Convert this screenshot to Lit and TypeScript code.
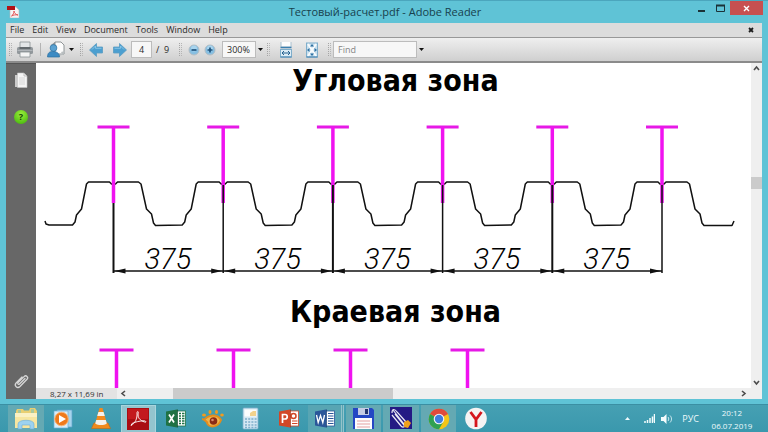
import { LitElement, html, svg, css } from "lit";
import { customElement } from "lit/decorators.js";

const MENUS = ["File", "Edit", "View", "Document", "Tools", "Window", "Help"];

const pic = (w: number, h: number, body: unknown) =>
  html`<svg class="pic" width=${w} height=${h} viewBox="0 0 ${w} ${h}" aria-hidden="true">${body}</svg>`;

const pdfIcon = pic(13, 12, svg`
  <path d="M3 1h6l3 3v8H3z" fill="#f6f4f4" stroke="#bdb5b8" stroke-width=".6"/>
  <path d="M0 0h8v4H0z" fill="#b01217"/>
  <path d="M4.500 10c1.500-1 2.500-3 2.500-5 .4 2.300 1.600 3.400 4 4-2.500-.5-4.500 0-6.500 1z" fill="none" stroke="#e0484b" stroke-width=".9"/>`);

const printIcon = pic(18, 17, svg`
  <path d="M4 1h10v6H4z" fill="#e3e6e8" stroke="#8c9296" stroke-width=".8"/>
  <rect x="1" y="6" width="16" height="7" rx="1.500" fill="#92989c"/>
  <path d="M3.500 6h11v2h-11z" fill="#636a6e"/>
  <path d="M4 11h10v5H4z" fill="#f4f5f5" stroke="#8c9296" stroke-width=".8"/>
  <path d="M1.500 9.500h15" stroke="#b9bec1" stroke-width=".8"/>`);

const shareIcon = pic(18, 18, svg`
  <path d="M8 1h6l3 3v9H8z" fill="#fcfcfc" stroke="#777d80" stroke-width=".8"/>
  <path d="M4 4l4-3v3z" fill="#8a9094"/>
  <path d="M9 14l6-1-1-2 4-1-1.500 3.500-6 2z" fill="#b9bec0"/>
  <circle cx="6.500" cy="7" r="3.400" fill="#5ba2d2" stroke="#2c709f" stroke-width=".7"/>
  <path d="M.5 16c0-4 2-5.500 5-5.500 4 0 7 1.500 7 5.500z" fill="#3d8bc3" stroke="#2c709f" stroke-width=".7"/>`);

const arrow = (flip: boolean) => pic(14, 14, svg`
  <path transform=${flip ? "matrix(-1 0 0 1 14 0)" : "matrix(1 0 0 1 0 0)"}
    d="M.5 7L7.500 .5v3.500H13.500v6H7.500V13.500z" fill="#4c9fd0" stroke="#5b9cc2" stroke-width=".8" stroke-linejoin="round"/>
  <path transform=${flip ? "matrix(-1 0 0 1 14 0)" : "matrix(1 0 0 1 0 0)"} d="M3 6.500L6.500 3v2.300h6" fill="none" stroke="#8bc7e8" stroke-width=".9"/>`);

const zoomGlyph = (plus: boolean) => pic(12, 12, svg`
  <circle cx="6" cy="6" r="5" fill="#86bfe2" stroke="#b3bdc4" stroke-width="1"/>
  <circle cx="6" cy="4.500" r="3" fill="#a8d4ee"/>
  <path d=${plus ? "M3.500 6h5M6 3.500v5" : "M3.500 6h5"} stroke="#1e527c" stroke-width="1.700"/>`);

const fitWidth = pic(12, 16, svg`
  <path d="M1 0v5h10V0" fill="#fdfdfd" stroke="#a9c0cf"/>
  <path d="M.5 5.500h11" stroke="#3c7fae" stroke-width="1.500"/>
  <rect x=".5" y="7.500" width="11" height="7.500" fill="#dcecf6" stroke="#7faecb"/>
  <path d="M.5 15h11" stroke="#3c7fae"/>
  <path d="M2 11h8M4 9l-2 2 2 2M8 9l2 2-2 2" fill="none" stroke="#25618f"/>`);

const fitPage = pic(12, 16, svg`
  <rect x=".5" y="1" width="11" height="14" fill="#c9e0ef" stroke="#7faecb"/>
  <path d="M2 2l8 12M10 2L2 14" stroke="#f7fbfd" stroke-width="2"/>
  <path d="M6 2L4 4.500h4zM6 14l-2-2.500h4zM1 8l2.500-2v4zM11 8L8.500 6v4z" fill="#2c6fa0"/>
  <path d="M.5 15h11" stroke="#3c7fae"/>`);

const pagesIcon = pic(14, 17, svg`
  <path d="M1 3h8v12H1z" fill="#c9c9c9"/>
  <path d="M3.500 1H10l3 3v11.500H3.500z" fill="#f4f4f4" stroke="#c2c2c2" stroke-width=".6"/>
  <path d="M10 1v3h3" fill="none" stroke="#aaa" stroke-width=".7"/>
  <path d="M5 6h6M5 8h6M5 10h6M5 12h6" stroke="#c9c9c9" stroke-width=".7"/>`);

const clipIcon = pic(17, 17, svg`
  <path d="M12 5.500L6.500 11c-1 1-2.400-.2-1.400-1.400l6-6c2-2 4.800.6 2.900 2.700L7 13.500c-2.600 2.500-6.300-.8-3.900-3.500L9 4"
    fill="none" stroke="#d6d6d6" stroke-width="1.300" stroke-linecap="round"/>`);

const tri = html`<svg class="pic" width="5" height="3" viewBox="0 0 5 3" aria-hidden="true"><path d="M0 0h5L2.500 3z" fill="#111"/></svg>`;

const chevron = (d: string) => pic(7, 7, svg`<path d=${d} fill="none" stroke="#4c4c4c" stroke-width="1.600"/>`);

interface Task { name: string; state: string; art: unknown }

const office = (fill: string, dark: string, mark: unknown, sheet: unknown) => svg`
  <rect x="9" y="4" width="11.500" height="15" fill="#fff" stroke=${fill} stroke-width=".8"/>${sheet}
  <path d="M1 4.500L12 2.500v18L1 18.500z" fill=${fill}/><path d="M12 2.500h.8v18H12z" fill=${dark}/>${mark}`;

const TASKS: Task[] = [
  { name: "Explorer", state: "open", art: svg`
    <path d="M1 4l1-2h6l1 1.500h5L15 1h5l2 3v15H1z" fill="#e9cf72"/>
    <path d="M3 3h3v3H3zM16 2h3v4h-3z" fill="#a9c9a0"/>
    <path d="M0 6h22v15H0z" fill="#f7e6a1"/><path d="M0 6h22v4H0z" fill="#fbf1c4"/>
    <path d="M3 22v-5c0-5 16-5 16 0v5h-4v-4H7v4z" fill="#9dd2ef" stroke="#69acd6" stroke-width=".6"/>` },
  { name: "Media Player", state: "", art: svg`
    <path d="M5 3h15v17H5z" fill="#a7d4ec" stroke="#5fa5cd" stroke-width=".7"/>
    <path d="M2 4h14v17H2z" fill="#d8edf8" stroke="#6bb0d8" stroke-width=".7"/>
    <circle cx="9.500" cy="12" r="6.800" fill="#ef7a1b" stroke="#f9b77a"/>
    <path d="M7 8l7 4-7 4z" fill="#fff"/>` },
  { name: "VLC", state: "", art: svg`
    <path d="M4 16h14l2.500 5.500h-19z" fill="#f08a1d" stroke="#c96a0c" stroke-width=".6"/>
    <path d="M9.500 1h3l4.500 16c-2 2.500-10 2.500-12 0z" fill="#f28b1f"/>
    <path d="M8.400 5h5.200l1.200 4H7.200zM6.200 13h9.600l1 3.500c-3 2-8.600 2-11.600 0z" fill="#f5f1ec"/>` },
  { name: "Adobe Reader", state: "active", art: svg`
    <rect x="0" y="0" width="22" height="22" fill="#a90d12"/><rect x="1" y="1" width="20" height="10" fill="#c3191e"/>
    <path d="M4 17.500c4-2 6.500-7 6-12.500 0-2 1.800-2 1.200.5-.8 4 1.800 7 6.300 8.500 2.500.8 1.500-1.200-.5-1.200C13 12.800 8 14 5 15.500z" fill="none" stroke="#fff" stroke-width=".9"/>` },
  { name: "Excel", state: "", art: office("#1f7244", "#155231",
    svg`<path d="M4 7.500l5 8M9 7.500l-5 8" stroke="#fff" stroke-width="1.700"/>`,
    svg`<path d="M14 6.500h5.500M14 9h5.500M14 11.500h5.500M14 14h5.500M14 16.500h5.500" stroke="#1f7244" stroke-width="1.300"/><path d="M16.500 5v13" stroke="#fff"/>`) },
  { name: "Image Viewer", state: "", art: svg`
    <path d="M2 13c4-5 13-7 17 0-3 8-12 8-14 3" fill="#f1b64e" stroke="#e38c1d" stroke-width="2"/>
    <path d="M0 12c3 0 4 3 6 4" fill="none" stroke="#e38c1d" stroke-width="2"/>
    <circle cx="11.500" cy="14" r="3.800" fill="#8b2b16"/><circle cx="10.500" cy="13" r="1.300" fill="#d98b6a"/>
    <ellipse cx="2" cy="8" rx="2" ry="1.500" fill="#f29b1d"/><ellipse cx="8" cy="5" rx="1.500" ry="2" fill="#f29b1d"/>
    <ellipse cx="14.500" cy="5" rx="1.500" ry="2" fill="#f29b1d"/><ellipse cx="20" cy="8" rx="1.800" ry="1.600" fill="#f29b1d"/>` },
  { name: "Calculator", state: "", art: svg`
    <rect x="3" y="1" width="15" height="21" rx="1" fill="#d5e8f3" stroke="#7fb0cc" stroke-width=".8"/>
    <rect x="4.500" y="2.500" width="12" height="7" fill="#fbfdfe"/><path d="M10 6l3-2h3v5h-6z" fill="#f2d28c"/>
    <path d="M5 12h12M5 15h12M5 18h12M5 20.500h12" stroke="#7faecb" stroke-width="1.500" stroke-dasharray="2 1.200"/>` },
  { name: "PowerPoint", state: "", art: office("#d24726", "#a93418",
    svg`<path d="M4.500 16V7.500H7c3 0 3 4.500 0 4.500H4.500" fill="none" stroke="#fff" stroke-width="1.700"/>`,
    svg`<circle cx="15.500" cy="9" r="2.500" fill="none" stroke="#d24726" stroke-width="1.500"/><path d="M14 14h5.500M14 16.500h5.500" stroke="#d24726" stroke-width="1.200"/>`) },
  { name: "Word", state: "stack", art: office("#2a5699", "#1b3f77",
    svg`<path d="M2.500 8l1.700 7.500L6.500 8.500l2.300 7L10.500 8" fill="none" stroke="#fff" stroke-width="1.300"/>`,
    svg`<path d="M14 6.500h5.500M14 9h5.500M14 11.500h5.500M14 14h5.500M14 16.500h5.500" stroke="#2a5699" stroke-width="1.100"/>`) },
  { name: "Commander", state: "open", art: svg`
    <path d="M0 1h19l2 2v19H0z" fill="#2447c4"/><path d="M5 1h11v7H5z" fill="#c5cce4"/>
    <path d="M12 2h3v5h-3z" fill="#23356f"/><path d="M2 11h17v11H2z" fill="#fdfdfd"/>
    <path d="M4 14h13M4 17h13M4 20h13" stroke="#e5a1a1" stroke-width="1.100"/>` },
  { name: "Drafting", state: "open", art: svg`
    <rect width="22" height="22" fill="#241a84"/>
    <path d="M2 6c0-5 3-4 5-1l9 10M3 3l11 14M2 8l9 11c2 2 4 1 3-1L5 7" fill="none" stroke="#eceaf5" stroke-width="1.200"/>
    <path d="M14 15l4-2 3 3-3 5-4-1z" fill="#f0a11c"/>` },
  { name: "Chrome", state: "open", art: svg`
    <circle cx="11" cy="12" r="10.300" fill="#f5c518"/>
    <path d="M11 12L2 7A10.300 10.300 0 0 1 20 7z" fill="#df4a3d"/>
    <path d="M11 12L2 7A10.300 10.300 0 0 0 11 22.300L15.500 14.500z" fill="#2fa152"/>
    <circle cx="11" cy="12" r="5.300" fill="#f6f6f6"/><circle cx="11" cy="12" r="4.200" fill="#3e7de0"/>` },
  { name: "Yandex", state: "", art: svg`
    <circle cx="11" cy="11.500" r="10.800" fill="#f5f3f3"/>
    <path d="M5.500 5L11 12.500V20M16.500 5L11 12.500" fill="none" stroke="#d5161d" stroke-width="2.800"/>` },
];

const WAVE = 109.7;
const POSTS = Array.from({ length: 6 }, (_, i) => 77.5 + i * WAVE);

const profile = () => {
  const humps = POSTS.map((x) => {
    const p = (dx: number, y: number) => `L${x + dx} ${y}`;
    return [p(-41, 125), p(-38.5, 122), p(-37, 115), p(-32, 109), p(-27, 84), p(-25, 82), p(-4, 82),
      p(-2, 84), p(2, 84), p(4, 82), p(25, 82), p(27.5, 84), p(33, 109), p(38, 114), p(40, 123), p(42, 125.5)].join("");
  });
  return `M9 121L10 124L13 125${humps.join("")}L696 125.500L698 121`;
};

@customElement("app-root")
export class AppRoot extends LitElement {
  static styles = css`
    :host { display: flex; flex-direction: column; height: 100vh; overflow: hidden; background: #5fc3d6;
      font: 9px/12px "Open Sans", "Noto Sans", sans-serif; color: #2a2a2a; }
    * { box-sizing: border-box; }
    button, input { font: inherit; color: inherit; margin: 0; padding: 0; border: 0; background: none; border-radius: 0; }
    .pic { display: block; flex: none; }
    .title { display: grid; grid-template-columns: 1fr auto 1fr; height: 23px; border-top: 1px solid #4ba6bd; padding: 0 5px 0 7px; flex: none; }
    .title .pic { margin-top: 5px; }
    .title h1 { margin: 0; font-size: 11px; font-weight: 400; line-height: 22px; color: #17414d; }
    .caps { display: flex; justify-content: flex-end; height: 14px; }
    .caps button { width: 19px; display: grid; place-items: center; }
    .title .caps .pic { margin: 0; }
    .caps .close { width: 33px; background: #c75050; }
    .frame { flex: 1; min-height: 0; margin: 0 6px 5px; display: flex; flex-direction: column; background: #fff; }
    .menu { display: flex; align-items: center; gap: 8px; height: 15px; padding: 0 8px 0 4px; background: #dcdcdc; border-bottom: 1px solid #989898; flex: none; }
    .menu button:last-child { margin-left: auto; }
    .tools { display: flex; align-items: center; height: 25px; flex: none; padding-left: 3px;
      background: linear-gradient(#efefef, #cfcfcf); border-bottom: 2px solid #8b8b8b; }
    .tools button { display: grid; place-items: center; flex: none; }
    .grip { width: 3px; height: 13px; border-left: 1px dotted #a5a5a5; border-right: 1px dotted #b5b5b5; flex: none; }
    .rule { width: 1px; height: 13px; background: #b4b4b4; flex: none; }
    .tools input { height: 17px; background: #f7f7f7; border: 1px solid #bcbcbc; flex: none; }
    .page { width: 21px; text-align: center; }
    .of { width: 13px; white-space: nowrap; flex: none; }
    .zoom { width: 34px; padding-left: 4px; }
    .find { width: 84px; padding-left: 4px; }
    .find::placeholder { color: #858585; opacity: 1; }
    .g2 { margin-left: 2px; } .g4 { margin-left: 4px; } .g6 { margin-left: 6px; } .g10 { margin-left: 10px; } .g14 { margin-left: 14px; }
    .body { flex: 1; min-height: 0; display: grid; grid-template-columns: 30px minmax(0, 1fr) 11px; grid-template-rows: minmax(0, 1fr) 11px; }
    .side { grid-row: 1 / 3; background: #676767; border-top: 1px solid #555; display: flex; flex-direction: column; align-items: center; padding: 8px 0 9px; gap: 21px; }
    .side button:last-child { margin-top: auto; }
    .help { width: 14px; height: 14px; border-radius: 50%; background: radial-gradient(circle at 50% 30%, #9bee3c, #3cb106); color: #124a05; font-weight: 700; line-height: 14px; }
    .doc { overflow: hidden; background: #fff; color: #000; }
    .doc h2 { margin: 0; text-align: center; font: 700 30px/35px "DejaVu Sans Condensed", "DejaVu Sans", sans-serif; font-stretch: condensed; padding-left: 4px; white-space: nowrap; }
    .doc svg { display: block; width: 100%; }
    .num { font: italic 300 29px Roboto, "Open Sans", sans-serif; }
    .vbar { background: #efefef; display: grid; grid-template-rows: 11px 103px 12px 1fr 11px; justify-items: center; align-items: center; }
    .vthumb { grid-row: 3; width: 11px; height: 12px; background: #cbcbcb; }
    .vbar .down { grid-row: 5; }
    .hbar { grid-column: 2 / 4; background: #efefef; display: flex; align-items: center; }
    .size { width: 81px; padding-left: 14px; background: #e3e3e3; line-height: 11px; flex: none; color: #333; font-size: 8px; }
    .hbar .left { width: 12px; display: grid; place-items: center; }
    .track { flex: 1; height: 11px; display: grid; grid-template-columns: 44px 36% 1fr; }
    .hthumb { grid-column: 2; background: #cbcbcb; }
    .hbar .right { width: 22px; }
    .bar { height: 28px; flex: none; display: flex; justify-content: space-between; background: linear-gradient(#46a0b3, #3a98ad); border-top: 1px solid #3b8fa3; padding: 0 14px 0 7px; color: #eefafc; }
    .apps { display: grid; grid-template-columns: repeat(13, minmax(0, 1fr)); width: 488px; }
    .apps button { display: grid; place-items: center; margin: 0 1px; }
    .apps .open { background: #64a9b3; }
    .apps .active { background: #93c4ce; border: 1px solid #a9d5dd; border-bottom: 0; }
    .apps .stack { background: #58a5b3; border-right: 3px double #94c3cb; }
    .tray { display: flex; align-items: center; }
    .tray .up { margin-right: 14px; } .tray .net { margin-right: 6px; } .tray .vol { margin-right: 9px; }
    .clock { width: 44px; margin-left: 11px; text-align: center; font-size: 8px; line-height: 13px; white-space: nowrap; }
    .clock time { display: block; }
  `;

  render() {
    return html`
      <header class="title">
        ${pdfIcon}
        <h1>Тестовый-расчет.pdf - Adobe Reader</h1>
        <div class="caps">
          <button aria-label="Minimize">${pic(9, 9, svg`<path d="M1 7h7" stroke="#1b3238" stroke-width="2"/>`)}</button>
          <button aria-label="Maximize">${pic(9, 9, svg`<path d="M.5 1.500h8v6h-8z" fill="none" stroke="#1b3238"/><path d="M0 1.500h9" stroke="#1b3238" stroke-width="2"/>`)}</button>
          <button class="close" aria-label="Close">${pic(7, 7, svg`<path d="M1 1l5 5M6 1L1 6" stroke="#fff" stroke-width="1.400"/>`)}</button>
        </div>
      </header>
      <main class="frame">
        <nav class="menu">
          ${MENUS.map((m) => html`<button>${m}</button>`)}
          <button aria-label="Close document">${pic(6, 6, svg`<path d="M1 1l4 4M5 1L1 5" stroke="#1d1d1d" stroke-width="1.800"/>`)}</button>
        </nav>
        <div class="tools">
          <span class="grip"></span>
          <button class="g4" aria-label="Print">${printIcon}</button>
          <span class="rule g6"></span>
          <button class="g6" aria-label="Share">${shareIcon}</button>
          <button class="g4" aria-label="Share options">${tri}</button>
          <span class="grip g6"></span>
          <button class="g6" aria-label="Previous page">${arrow(false)}</button>
          <button class="g10" aria-label="Next page">${arrow(true)}</button>
          <input class="page g4" aria-label="Page" value="4" />
          <span class="of g4">/&nbsp; 9</span>
          <span class="grip g10"></span>
          <button class="g6" aria-label="Zoom out">${zoomGlyph(false)}</button>
          <button class="g4" aria-label="Zoom in">${zoomGlyph(true)}</button>
          <input class="zoom g6" aria-label="Zoom" value="300%" />
          <button class="g2" aria-label="Zoom levels">${tri}</button>
          <span class="grip g4"></span>
          <button class="g10" aria-label="Fit width">${fitWidth}</button>
          <button class="g14" aria-label="Fit page">${fitPage}</button>
          <span class="grip g10"></span>
          <input class="find g2" aria-label="Find" placeholder="Find" />
          <button class="g2" aria-label="Find options">${tri}</button>
        </div>
        <div class="body">
          <aside class="side">
            <button aria-label="Pages">${pagesIcon}</button>
            <button class="help" aria-label="Help">?</button>
            <button aria-label="Attachments">${clipIcon}</button>
          </aside>
          <article class="doc">
            <h2>Угловая зона</h2>
            <svg viewBox="0 -2 715 196">
              <path d=${profile()} fill="none" stroke="#111" stroke-width="1.500" stroke-linejoin="round"/>
              ${POSTS.map((x, i) => svg`
                <path d="M${x - 16} 27h32" stroke="#e619e6" stroke-width="3"/>
                <path d="M${x} 27v76" stroke="#f012f0" stroke-width="3.500"/>
                <path d="M${x} ${i ? 85 : 103}V173" stroke="#111" stroke-width=${i % 2 ? 1.5 : 2}/>`)}
              ${POSTS.slice(0, 5).map((x) => svg`
                <path d="M${x} 171H${x + WAVE}" stroke="#111" stroke-width="1.500"/>
                <path d="M${x + 1} 171l11-2.500v5zM${x + WAVE - 1} 171l-11-2.500v5z" fill="#111"/>
                <text class="num" x=${x + 31} y="169">375</text>`)}
            </svg>
            <h2>Краевая зона</h2>
            <svg viewBox="0 2 715 78">
              ${[80.5, 197.5, 314.5, 431.5].map((x) => svg`
                <path d="M${x - 17} 23h34" stroke="#e619e6" stroke-width="3"/>
                <path d="M${x} 23v57" stroke="#f012f0" stroke-width="3.500"/>`)}
            </svg>
          </article>
          <div class="vbar">
            ${chevron("M1 5l2.500-3L6 5")}
            <div class="vthumb"></div>
            <div class="down">${chevron("M1 2l2.500 3L6 2")}</div>
          </div>
          <div class="hbar">
            <div class="size">8,27 x 11,69 in</div>
            <div class="left">${chevron("M5 1L2 3.500L5 6")}</div>
            <div class="track"><div class="hthumb"></div></div>
            <div class="right">${chevron("M2 1l3 2.500L2 6")}</div>
          </div>
        </div>
      </main>
      <footer class="bar">
        <nav class="apps">
          ${TASKS.map((t) => html`<button class=${t.state} aria-label=${t.name}>${pic(22, 23, t.art)}</button>`)}
        </nav>
        <div class="tray">
          <div class="up">${pic(5, 3, svg`<path d="M0 3h5L2.500 0z" fill="#eefafc"/>`)}</div>
          <div class="net">${pic(11, 9, svg`<path d="M1 9V7M3.500 9V6M6 9V4M8.500 9V2.500M10.500 9V0" stroke="#f4fcfd" stroke-width="1.500"/>`)}</div>
          <div class="vol">${pic(12, 10, svg`<path d="M0 3h2.500L5.500 0v10L2.500 7H0z" fill="#f4fcfd"/><path d="M7 3c1 1 1 3 0 4M9 1.500c2 2 2 5 0 7" fill="none" stroke="#cdeaf0"/>`)}</div>
          <span>РУС</span>
          <div class="clock"><time>20:12</time><time>06.07.2019</time></div>
        </div>
      </footer>`;
  }
}
